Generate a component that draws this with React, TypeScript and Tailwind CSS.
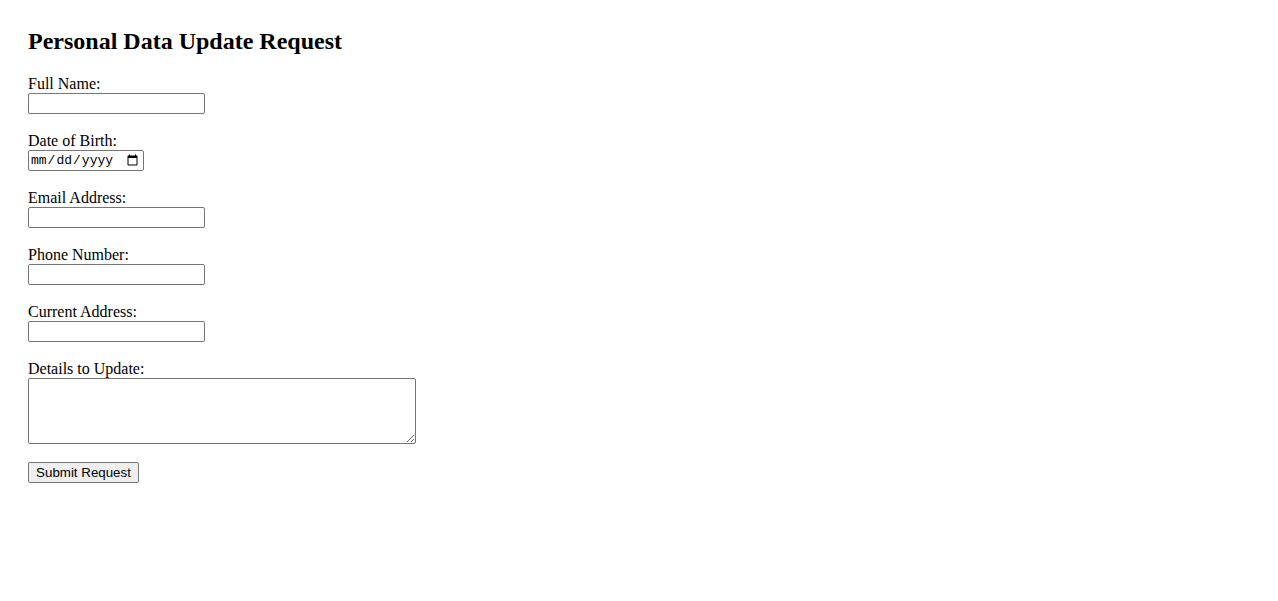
import React from "react";

const serif = { fontFamily: '"Liberation Serif", "Times New Roman", serif' };

function Field({ label, children }: { label: string; children: React.ReactNode }) {
  return (
    <div className="flex flex-col items-start mb-[18px]">
      <label className="text-[16px] leading-[18px] text-black">{label}</label>
      {children}
    </div>
  );
}

const inputCls =
  "block w-[177px] h-[21px] border border-[#767676] rounded-[2px] bg-white px-[2px] text-[13px] outline-none";

export default function App() {
  return (
    <div
      className="min-h-[601px] bg-white text-black px-[28px] pt-[28px] font-['Liberation_Serif','Times_New_Roman',serif]"
      style={serif}
    >
      <h2 className="text-[24px] leading-[27px] font-bold mb-[20px]">Personal Data Update Request</h2>
      <form className="flex flex-col items-start" onSubmit={(e) => e.preventDefault()}>
        <Field label="Full Name:">
          <input type="text" className={inputCls} />
        </Field>
        <Field label="Date of Birth:">
          <input
            type="date"
            className="block w-[116px] h-[21px] border border-[#767676] rounded-[2px] bg-white pl-[1px] pr-[2px] text-[13px] font-['Liberation_Mono',monospace] outline-none"
          />
        </Field>
        <Field label="Email Address:">
          <input type="email" className={inputCls} />
        </Field>
        <Field label="Phone Number:">
          <input type="tel" className={inputCls} />
        </Field>
        <Field label="Current Address:">
          <input type="text" className={inputCls} />
        </Field>
        <Field label="Details to Update:">
          <textarea className="block w-[388px] h-[66px] border border-[#767676] rounded-[2px] bg-white p-[2px] text-[13px] outline-none" />
        </Field>
        <button
          type="submit"
          className="h-[21px] w-[111px] border border-[#767676] rounded-[2px] bg-[#efefef] text-[13.33px] leading-[19px] font-['Liberation_Sans',Arial,sans-serif] text-black"
        >
          Submit Request
        </button>
      </form>
    </div>
  );
}
